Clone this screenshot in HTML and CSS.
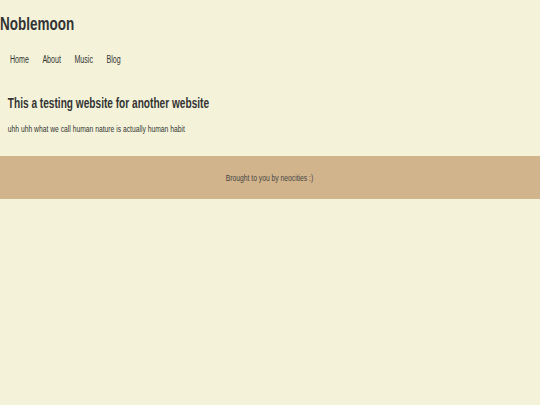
FILE: index.html
```html
<!DOCTYPE html>
<html lang="en">
<head>
<meta charset="utf-8">
<title>Noblemoon</title>
<link rel="stylesheet" href="styles.css">
</head>
<body>
<header class="site-header">
  <h1 class="site-title">Noblemoon</h1>
  <nav class="site-nav">
    <a href="#">Home</a>
    <a href="#">About</a>
    <a href="#">Music</a>
    <a href="#">Blog</a>
  </nav>
</header>
<main class="content">
  <h2 class="headline">This a testing website for another website</h2>
  <p class="lead">uhh uhh what we call human nature is actually human habit</p>
</main>
<footer class="site-footer">
  <p class="credit">Brought to you by neocities :)</p>
</footer>
</body>
</html>
```

FILE: styles.css
```css
html, body {
  margin: 0;
  padding: 0;
  background: #f4f3da;
  color: #333333;
  font-family: "Liberation Sans", Arial, sans-serif;
}
/* the reference type is horizontally condensed */
.site-title,
.site-nav,
.content {
  transform: scaleX(0.71);
  transform-origin: left top;
}
.site-header {
  padding-top: 13px;
}
.site-title {
  margin: 0;
  font-size: 19px;
  font-weight: bold;
  line-height: 22px;
  color: #333333;
}
.site-nav {
  display: flex;
  gap: 19px;
  padding: 18px 14px 0;
}
.site-nav a {
  color: #333333;
  text-decoration: none;
  font-size: 10px;
  line-height: 14px;
}
.content {
  padding: 27px 11px 21px;
}
.headline {
  margin: 0;
  font-size: 14.25px;
  line-height: 18px;
  font-weight: bold;
}
.lead {
  margin: 11px 0 0;
  font-size: 9.5px;
  line-height: 12px;
}
.site-footer {
  background: #d2b48c;
  height: 43px;
  display: flex;
  align-items: center;
  justify-content: center;
}
.credit {
  margin: 0;
  font-size: 9.5px;
  color: #444444;
  transform: scaleX(0.71);
  transform-origin: center;
}
```
